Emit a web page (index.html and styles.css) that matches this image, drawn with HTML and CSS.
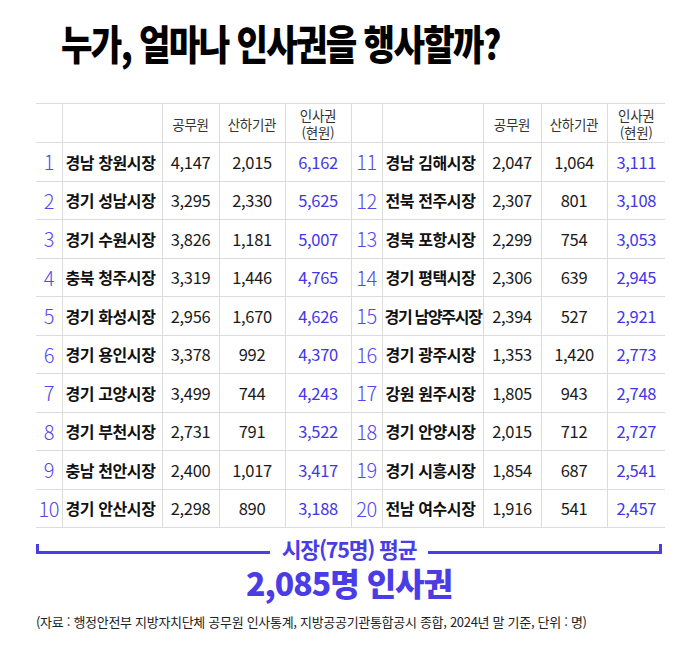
FILE: index.html
```html
<!DOCTYPE html>
<html lang="ko">
<head>
<meta charset="utf-8">
<link rel="stylesheet" href="styles.css">
</head>
<body>
<div class="page">
  <div class="title-wrap"><h1 class="title">누가, 얼마나 인사권을 행사할까?</h1></div>
  <table class="grid">
    <colgroup>
      <col class="c-rank-l"><col class="c-name"><col class="c-a"><col class="c-b"><col class="c-c-l">
      <col class="c-rank-r"><col class="c-name-r"><col class="c-a-r"><col class="c-b"><col class="c-c-r">
    </colgroup>
    <thead>
      <tr>
        <th></th><th></th><th>공무원</th><th>산하기관</th><th><span class="hl">인사권</span><span class="hl">(현원)</span></th>
        <th></th><th></th><th>공무원</th><th>산하기관</th><th><span class="hl">인사권</span><span class="hl">(현원)</span></th>
      </tr>
    </thead>
    <tbody>
      <tr><td class="rank">1</td><td class="name">경남 창원시장</td><td>4,147</td><td>2,015</td><td class="total">6,162</td><td class="rank">11</td><td class="name">경남 김해시장</td><td>2,047</td><td>1,064</td><td class="total">3,111</td></tr>
      <tr><td class="rank">2</td><td class="name">경기 성남시장</td><td>3,295</td><td>2,330</td><td class="total">5,625</td><td class="rank">12</td><td class="name">전북 전주시장</td><td>2,307</td><td>801</td><td class="total">3,108</td></tr>
      <tr><td class="rank">3</td><td class="name">경기 수원시장</td><td>3,826</td><td>1,181</td><td class="total">5,007</td><td class="rank">13</td><td class="name">경북 포항시장</td><td>2,299</td><td>754</td><td class="total">3,053</td></tr>
      <tr><td class="rank">4</td><td class="name">충북 청주시장</td><td>3,319</td><td>1,446</td><td class="total">4,765</td><td class="rank">14</td><td class="name">경기 평택시장</td><td>2,306</td><td>639</td><td class="total">2,945</td></tr>
      <tr><td class="rank">5</td><td class="name">경기 화성시장</td><td>2,956</td><td>1,670</td><td class="total">4,626</td><td class="rank">15</td><td class="name tight">경기 남양주시장</td><td>2,394</td><td>527</td><td class="total">2,921</td></tr>
      <tr><td class="rank">6</td><td class="name">경기 용인시장</td><td>3,378</td><td>992</td><td class="total">4,370</td><td class="rank">16</td><td class="name">경기 광주시장</td><td>1,353</td><td>1,420</td><td class="total">2,773</td></tr>
      <tr><td class="rank">7</td><td class="name">경기 고양시장</td><td>3,499</td><td>744</td><td class="total">4,243</td><td class="rank">17</td><td class="name">강원 원주시장</td><td>1,805</td><td>943</td><td class="total">2,748</td></tr>
      <tr><td class="rank">8</td><td class="name">경기 부천시장</td><td>2,731</td><td>791</td><td class="total">3,522</td><td class="rank">18</td><td class="name">경기 안양시장</td><td>2,015</td><td>712</td><td class="total">2,727</td></tr>
      <tr><td class="rank">9</td><td class="name">충남 천안시장</td><td>2,400</td><td>1,017</td><td class="total">3,417</td><td class="rank">19</td><td class="name">경기 시흥시장</td><td>1,854</td><td>687</td><td class="total">2,541</td></tr>
      <tr><td class="rank">10</td><td class="name">경기 안산시장</td><td>2,298</td><td>890</td><td class="total">3,188</td><td class="rank">20</td><td class="name">전남 여수시장</td><td>1,916</td><td>541</td><td class="total">2,457</td></tr>
    </tbody>
  </table>
  <div class="summary">
    <div class="bracket">
      <span class="bracket-line"></span>
      <span class="bracket-label">시장(75명) 평균</span>
      <span class="bracket-line"></span>
    </div>
    <div class="avg">2,085명 인사권</div>
  </div>
  <p class="source">(자료 : 행정안전부 지방자치단체 공무원 인사통계, 지방공공기관통합공시 종합, 2024년 말 기준, 단위 : 명)</p>
</div>
</body>
</html>
```

FILE: styles.css
```css
* { box-sizing: border-box; }
html, body { margin: 0; padding: 0; background: #fff; }
body {
  font-family: "Noto Sans CJK KR", "Noto Sans", sans-serif;
  color: #1a1a1a;
}
.page {
  width: 700px;
  height: 661px;
  overflow: hidden;
}
.title-wrap {
  height: 103px;
  padding: 10px 0 0 61px;
}
.title {
  display: inline-block;
  margin: 0;
  font-size: 41px;
  font-weight: 900;
  letter-spacing: -2px;
  line-height: 64px;
  color: #000;
  transform: scaleX(0.835);
  transform-origin: left center;
  white-space: nowrap;
}
.grid {
  margin-left: 36px;
  width: 629px;
  border-collapse: collapse;
  table-layout: fixed;
}
.c-rank-l { width: 26px; }
.c-name { width: 100px; }
.c-a { width: 57px; }
.c-b { width: 66px; }
.c-c-l { width: 66px; }
.c-rank-r { width: 31px; }
.c-name-r { width: 101px; }
.c-a-r { width: 58px; }
.c-c-r { width: 58px; }
.grid th, .grid td {
  border-top: 1px solid #dcdcdc;
  border-bottom: 1px solid #dcdcdc;
  border-left: 1px solid #dcdcdc;
  padding: 0;
  text-align: center;
  white-space: nowrap;
}
.grid tr > :first-child { border-left: none; }
.grid th {
  height: 39px;
  font-size: 13.5px;
  font-weight: 400;
  line-height: 18px;
  color: #333;
  padding-top: 1px;
  letter-spacing: -0.3px;
}
.grid th .hl {
  display: block;
  height: 17px;
  line-height: 17px;
  overflow: visible;
}
.grid td {
  height: 38.5px;
  font-size: 16.5px;
  color: #1a1a1a;
  letter-spacing: -0.3px;
}
.grid td.rank {
  font-size: 20px;
  font-weight: 300;
  color: #5447ef;
  letter-spacing: -0.5px;
}
.grid td.name {
  text-align: left;
  padding-left: 3px;
  font-weight: 700;
  font-size: 16px;
  letter-spacing: -0.4px;
  color: #111;
}
.grid td.name.tight { letter-spacing: -1.3px; padding-left: 2px; }
.grid td.total {
  color: #4336e8;
  font-weight: 400;
}
.summary {
  margin-top: 10px;
  padding: 0 38px 0 36px;
}
.bracket {
  display: flex;
  align-items: center;
  gap: 12px;
  height: 22px;
}
.bracket-line {
  flex: 1;
  height: 10px;
  border-bottom: 3px solid #4a3ce6;
}
.bracket-line:first-child { border-left: 3px solid #4a3ce6; }
.bracket-line:last-child { border-right: 3px solid #4a3ce6; }
.bracket-label {
  font-size: 21.5px;
  font-weight: 700;
  color: #4a3ce6;
  letter-spacing: -1.2px;
  line-height: 22px;
}
.avg {
  text-align: center;
  font-size: 32px;
  font-weight: 900;
  color: #4a3ce6;
  letter-spacing: -1px;
  line-height: 38px;
  margin-top: 3px;
}
.source {
  margin: 11px 0 0 36px;
  font-size: 13px;
  letter-spacing: -0.3px;
  color: #222;
}
```
